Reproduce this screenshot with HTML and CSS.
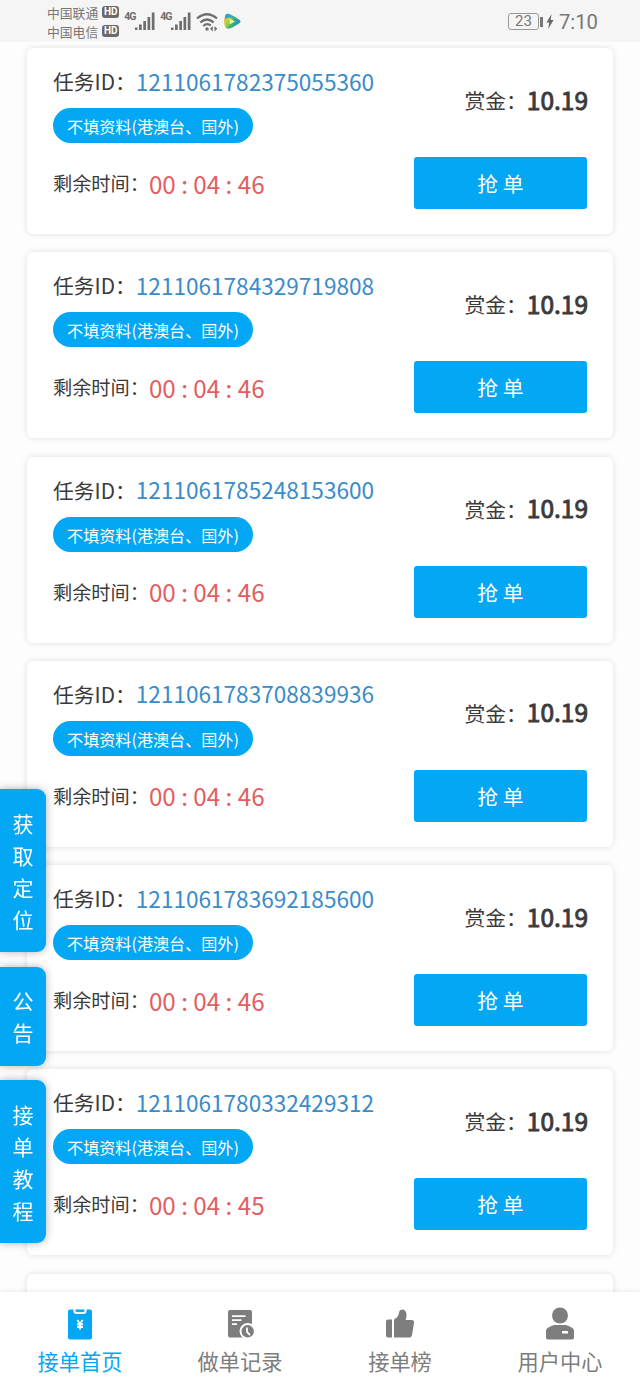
FILE: index.html
```html
<!DOCTYPE html>
<html lang="zh-CN">
<head>
  <meta charset="UTF-8" />
  <meta name="viewport" content="width=device-width, initial-scale=1" />
  <title>接单首页</title>
  <link rel="stylesheet" href="styles.css">
</head>
<body>

<header class="status">
  <div class="carriers">
    <div class="carrier">中国联通<span class="hd">HD</span></div>
    <div class="carrier">中国电信<span class="hd">HD</span></div>
  </div>
  <div class="signal">
    <span class="net">4G</span>
    <svg width="20" height="19" viewBox="0 0 20 19" fill="#6e6e6e"><path d="M0 15.500h2.500V18H0zM4 12.500h2.700V18H4zM8.300 9H11v9H8.300zM12.500 5h2.700v13h-2.700zM16.800 .5h2.700V18h-2.700z"/></svg>
  </div>
  <div class="signal">
    <span class="net">4G</span>
    <svg width="20" height="19" viewBox="0 0 20 19" fill="#6e6e6e"><path d="M0 15.500h2.500V18H0zM4 12.500h2.700V18H4zM8.300 9H11v9H8.300zM12.500 5h2.700v13h-2.700zM16.800 .5h2.700V18h-2.700z"/></svg>
  </div>
  <svg class="wifi" width="23" height="20" viewBox="0 0 23 20" fill="none" stroke="#6e6e6e" stroke-width="2.200">
    <path d="M1 6.500Q11 -2 21 6.500M4.300 10.500Q11 4.500 17.700 10.500M7.300 14Q11 10.700 14.700 13.500"/>
    <circle cx="11" cy="17" r="1.700" fill="#6e6e6e" stroke="none"/>
    <path d="M16.800 14V19.500L14 16.800zM18.500 14V19.500L21.300 16.800z" fill="#6e6e6e" stroke="none"/>
  </svg>
  <svg class="player" width="17" height="17" viewBox="0 0 17 17">
    <defs>
      <linearGradient id="play" x1="0" y1="0" x2="1" y2="0.5">
        <stop offset="0" stop-color="#f2b62b"/>
        <stop offset="0.35" stop-color="#c3d43c"/>
        <stop offset="0.65" stop-color="#35b36a"/>
        <stop offset="1" stop-color="#2490dc"/>
      </linearGradient>
    </defs>
    <path d="M3 1Q5 0 15 6.500Q18 8.500 15 10.500Q5 17 3 15.500Q-1 13 .5 5Q1 2 3 1z" fill="url(#play)"/>
    <path d="M1 3Q2 0 5 1Q9 2.500 13 5.500Q6 3 1 6z" fill="#2ba3d8"/>
    <path d="M5.500 5.500L11 8.500L5.500 11.500z" fill="#eef2a0"/>
  </svg>
  <div class="battery"><span class="level">23</span><span class="cap"></span></div>
  <svg class="bolt" width="8" height="15" viewBox="0 0 8 15" fill="#666"><path d="M5.500 0L.5 8.500h2.700L2.300 15L7.500 6H4.700z"/></svg>
  <div class="clock">7:10</div>
</header>

<main class="list">
  <section class="card">
    <div class="info">
      <div class="task">任务ID：<span class="id">1211061782375055360</span></div>
      <div class="tag">不填资料(港澳台、国外)</div>
      <div class="time">剩余时间：<span class="count">00 : 04 : 46</span></div>
    </div>
    <div class="side">
      <div class="reward">赏金：<span class="price">10.19</span></div>
      <button class="grab">抢 单</button>
    </div>
  </section>

  <section class="card">
    <div class="info">
      <div class="task">任务ID：<span class="id">1211061784329719808</span></div>
      <div class="tag">不填资料(港澳台、国外)</div>
      <div class="time">剩余时间：<span class="count">00 : 04 : 46</span></div>
    </div>
    <div class="side">
      <div class="reward">赏金：<span class="price">10.19</span></div>
      <button class="grab">抢 单</button>
    </div>
  </section>

  <section class="card">
    <div class="info">
      <div class="task">任务ID：<span class="id">1211061785248153600</span></div>
      <div class="tag">不填资料(港澳台、国外)</div>
      <div class="time">剩余时间：<span class="count">00 : 04 : 46</span></div>
    </div>
    <div class="side">
      <div class="reward">赏金：<span class="price">10.19</span></div>
      <button class="grab">抢 单</button>
    </div>
  </section>

  <section class="card">
    <div class="info">
      <div class="task">任务ID：<span class="id">1211061783708839936</span></div>
      <div class="tag">不填资料(港澳台、国外)</div>
      <div class="time">剩余时间：<span class="count">00 : 04 : 46</span></div>
    </div>
    <div class="side">
      <div class="reward">赏金：<span class="price">10.19</span></div>
      <button class="grab">抢 单</button>
    </div>
  </section>

  <section class="card">
    <div class="info">
      <div class="task">任务ID：<span class="id">1211061783692185600</span></div>
      <div class="tag">不填资料(港澳台、国外)</div>
      <div class="time">剩余时间：<span class="count">00 : 04 : 46</span></div>
    </div>
    <div class="side">
      <div class="reward">赏金：<span class="price">10.19</span></div>
      <button class="grab">抢 单</button>
    </div>
  </section>

  <section class="card">
    <div class="info">
      <div class="task">任务ID：<span class="id">1211061780332429312</span></div>
      <div class="tag">不填资料(港澳台、国外)</div>
      <div class="time">剩余时间：<span class="count">00 : 04 : 45</span></div>
    </div>
    <div class="side">
      <div class="reward">赏金：<span class="price">10.19</span></div>
      <button class="grab">抢 单</button>
    </div>
  </section>

  <section class="card"></section>
</main>

<!-- floating shortcuts -->
<aside class="shortcuts">
  <div class="shortcut">获取定位</div>
  <div class="shortcut">公告</div>
  <div class="shortcut">接单教程</div>
</aside>

<nav class="tabbar">
  <a class="tab active">
    <svg width="32" height="34" viewBox="0 0 32 34">
      <path d="M6 2.500H9.500V4Q9.500 7 12.500 7H19.500Q22.500 7 22.500 4V2.500H26Q28 2.500 28 4.500V30.500Q28 32.500 26 32.500H6Q4 32.500 4 30.500V4.500Q4 2.500 6 2.500z" fill="currentColor"/>
      <path d="M11.500 2.500H20.500V3.500Q20.500 5 19 5H13Q11.500 5 11.500 3.500z" fill="currentColor"/>
      <path d="M13.300 13L16 16.500L18.700 13M13 17.200H19M13 20H19M16 16.500V22.500" fill="none" stroke="#fff" stroke-width="1.900"/>
    </svg>
    <span>接单首页</span>
  </a>
  <a class="tab">
    <svg width="32" height="34" viewBox="0 0 32 34">
      <rect x="4" y="3" width="24" height="27.500" rx="2" fill="currentColor"/>
      <path d="M8 9.200H21.500M8 13.200H17.500M8 17.200H13" stroke="#fff" stroke-width="1.800"/>
      <circle cx="23.700" cy="24.300" r="7.200" fill="currentColor" stroke="#fff" stroke-width="2"/>
      <path d="M23 20.500V25L26 28" fill="none" stroke="#fff" stroke-width="1.800"/>
    </svg>
    <span>做单记录</span>
  </a>
  <a class="tab">
    <svg width="32" height="34" viewBox="0 0 32 34" fill="currentColor">
      <path d="M4 12.500H8V30.500H4Q2 30.500 2 28.500V14.500Q2 12.500 4 12.500z"/>
      <path d="M10 12.500Q14.500 10.500 15 5.500Q15.500 2.500 18.500 2.500Q22.500 3 22.500 8Q22.500 10.500 21.500 13H27.500Q30.500 13 30 16L28 28Q27.500 30.500 25.500 30.500H10z"/>
    </svg>
    <span>接单榜</span>
  </a>
  <a class="tab">
    <svg width="32" height="34" viewBox="0 0 32 34" fill="currentColor">
      <circle cx="16" cy="8.500" r="8"/>
      <path d="M10 18H22Q27 19.500 29 21.500Q30 22.500 30 24.500V30.500Q30 32.500 28 32.500H4Q2 32.500 2 30.500V24.500Q2 22.500 3 21.500Q5 19.500 10 18z"/>
      <rect x="18" y="24" width="6" height="2.500" rx="0.500" fill="#fff"/>
    </svg>
    <span>用户中心</span>
  </a>
</nav>

</body>
</html>
```
FILE: styles.css
```css
* {
  box-sizing: border-box;
}

body {
  margin: 0;
  height: 100vh;
  display: flex;
  flex-direction: column;
  overflow: hidden;
  background: #fdfdfd;
  color: #3a3a3a;
  font-family: "Noto Sans CJK SC", "Noto Sans", sans-serif;
}

/* status bar */
.status {
  height: 42px;
  flex-shrink: 0;
  display: flex;
  align-items: center;
  padding: 1px 42px 0 47px;
  background: #f5f5f5;
  color: #777;
}

.carrier {
  display: flex;
  align-items: center;
  height: 19px;
  font-size: 12.8px;
  line-height: 19px;
}

.hd {
  margin-left: 4px;
  width: 17px;
  height: 12px;
  border-radius: 3px;
  background: #6a6a6a;
  color: #fff;
  font: bold 10px/12px Roboto, sans-serif;
  text-align: center;
}

.signal {
  display: flex;
  align-items: flex-start;
  margin-left: 5px;
  width: 31px;
}

.signal + .signal {
  margin-left: 5px;
}

.net {
  width: 11px;
  font: bold 10.5px/10px Roboto, sans-serif;
  letter-spacing: -1px;
  color: #6e6e6e;
}

.wifi {
  margin-left: 5px;
}

.player {
  margin-left: 5px;
}

.battery {
  display: flex;
  align-items: center;
  margin-left: auto;
}

.level {
  width: 31px;
  height: 17px;
  border: 1.5px solid #999;
  border-radius: 3px;
  font: 15px/15px Roboto, sans-serif;
  text-align: center;
}

.cap {
  width: 3px;
  height: 10px;
  margin-left: 1px;
  background: #777;
}

.bolt {
  margin-left: 3px;
}

.clock {
  margin-left: 5px;
  font: 20.3px/24px Roboto, sans-serif;
  color: #777;
}

/* task list */
.list {
  flex: 1;
  min-height: 0;
  overflow: hidden;
  display: flex;
  flex-direction: column;
  gap: 18.3px;
  padding: 6px 27px 0;
}

.card {
  flex-shrink: 0;
  display: flex;
  justify-content: space-between;
  height: 186px;
  padding: 17px 26px 0;
  border-radius: 6px;
  background: #fff;
  box-shadow: 0 0 6px rgba(0,0,0,0.12);
}

.task {
  display: flex;
  align-items: center;
  height: 32px;
  font-size: 20.8px;
}

.id {
  font-size: 22.6px;
  color: #3a8bc8;
}

.tag {
  width: 200px;
  height: 35px;
  margin-top: 11px;
  border-radius: 18px;
  background: #03a7f3;
  color: #fff;
  font-size: 16.1px;
  line-height: 36px;
  text-align: center;
}

.time {
  display: flex;
  align-items: center;
  height: 36px;
  margin-top: 22px;
  font-size: 19.2px;
}

.count {
  font-size: 24.2px;
  color: #e25e60;
}

.side {
  display: flex;
  flex-direction: column;
  align-items: flex-end;
}

.reward {
  display: flex;
  align-items: center;
  height: 36px;
  margin-top: 17px;
  margin-right: -1px;
  font-size: 20.8px;
}

.price {
  margin-top: -2px;
  font-size: 24.5px;
  -webkit-text-stroke: 0.9px #3a3a3a;
}

.grab {
  width: 173px;
  height: 52px;
  margin-top: 39px;
  padding: 0;
  border: 0;
  border-radius: 3px;
  background: #03a7f3;
  color: #fff;
  font-family: inherit;
  font-size: 20.8px;
}

/* shortcuts pinned to the left edge */
.shortcuts {
  position: fixed;
  left: 0;
  top: 789px;
  display: flex;
  flex-direction: column;
  gap: 14.5px;
}

.shortcut {
  width: 46px;
  padding: 17.5px 12.5px;
  border-radius: 0 9px 9px 0;
  background: #03a7f3;
  box-shadow: 0 0 8px rgba(0,0,0,0.3);
  color: #fff;
  font-size: 21px;
  line-height: 32px;
  word-break: break-all;
}

/* bottom tabs */
.tabbar {
  position: relative;
  flex-shrink: 0;
  display: flex;
  height: 94px;
  background: #fff;
  box-shadow: 0 0 5px rgba(0,0,0,0.1);
}

.tab {
  flex: 1;
  display: flex;
  flex-direction: column;
  align-items: center;
  padding-top: 15px;
  color: #7d7d7d;
  font-size: 21.2px;
  line-height: 32px;
}

.tab span {
  margin-top: 4px;
}

.active {
  color: #03a7f3;
}
```
